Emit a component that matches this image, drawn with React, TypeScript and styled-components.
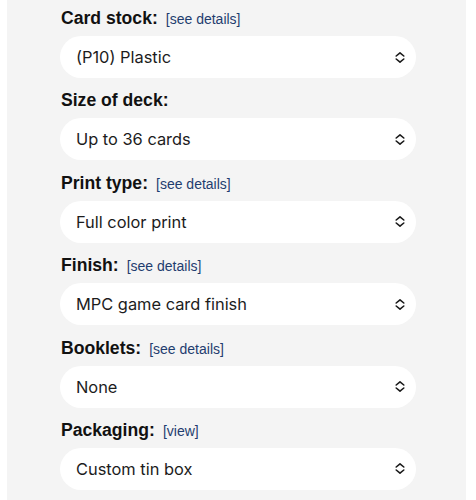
import React from "react";
import styled, { createGlobalStyle } from "styled-components";

const Global = createGlobalStyle`
  html, body { margin: 0; padding: 0; background: #ffffff; }
  body { font-family: "Liberation Sans", Arial, sans-serif; }
`;

const Panel = styled.div`
  margin: 0 10px 0 7px;
  width: 459px;
  height: 500px;
  background: #f4f4f4;
  box-sizing: border-box;
  padding: 7px 50px 0 53px;
  overflow: hidden;
`;

const Field = styled.div`
  display: flex;
  flex-direction: column;
  gap: 7px;
  margin-bottom: 11.4px;
`;

const LabelRow = styled.div`
  display: flex;
  align-items: baseline;
  gap: 8px;
  height: 22px;
  line-height: 22px;
  padding-left: 1px;
`;

const Label = styled.span`
  font-family: "Liberation Sans", Arial, sans-serif;
  font-weight: 700;
  font-size: 17.6px;
  color: #111;
`;

const Link = styled.a`
  font-family: "Liberation Sans", Arial, sans-serif;
  font-size: 14px;
  color: #1f3d6f;
  text-decoration: none;
`;

const Select = styled.div`
  height: 42px;
  border-radius: 21px;
  background: #ffffff;
  display: flex;
  align-items: center;
  justify-content: space-between;
  padding: 0 10px 0 16px;
  font-family: Inter, "Liberation Sans", sans-serif;
  font-size: 16.4px;
  color: #1c1c1c;
`;

const Chevron = () => (
  <svg width="12" height="13" viewBox="0 0 12 13" fill="none">
    <path d="M2.2 5 L6 1.8 L9.8 5" stroke="#1a1a1a" strokeWidth="1.6" strokeLinecap="round" strokeLinejoin="round" />
    <path d="M2.2 8 L6 11.2 L9.8 8" stroke="#1a1a1a" strokeWidth="1.6" strokeLinecap="round" strokeLinejoin="round" />
  </svg>
);

const fields: { label: string; link?: string; value: string }[] = [
  { label: "Card stock:", link: "[see details]", value: "(P10) Plastic" },
  { label: "Size of deck:", value: "Up to 36 cards" },
  { label: "Print type:", link: "[see details]", value: "Full color print" },
  { label: "Finish:", link: "[see details]", value: "MPC game card finish" },
  { label: "Booklets:", link: "[see details]", value: "None" },
  { label: "Packaging:", link: "[view]", value: "Custom tin box" },
];

export default function App() {
  return (
    <>
      <Global />
      <Panel>
        {fields.map((f) => (
          <Field key={f.label}>
            <LabelRow>
              <Label>{f.label}</Label>
              {f.link && <Link href="#">{f.link}</Link>}
            </LabelRow>
            <Select>
              <span>{f.value}</span>
              <Chevron />
            </Select>
          </Field>
        ))}
      </Panel>
    </>
  );
}
